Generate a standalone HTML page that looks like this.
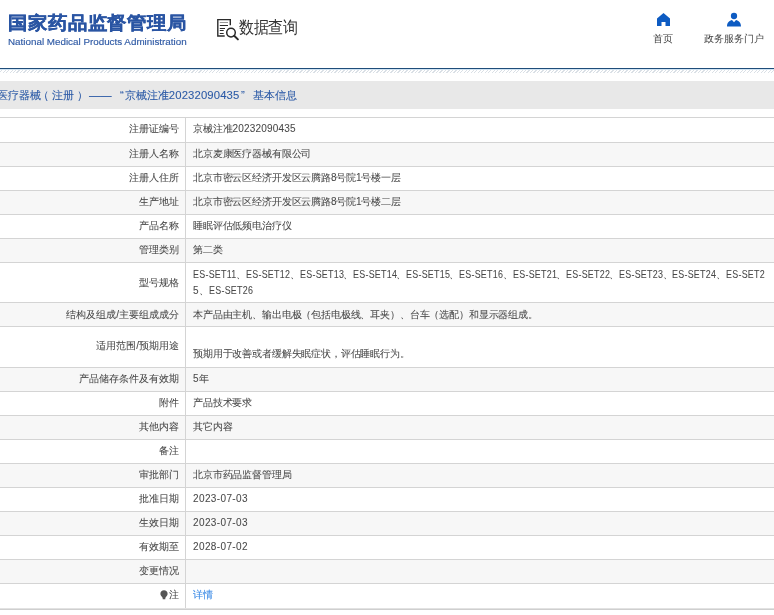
<!DOCTYPE html>
<html><head><meta charset="utf-8">
<style>
html,body{margin:0;padding:0;background:#fff;}
body{will-change:transform;width:774px;height:615px;overflow:hidden;position:relative;font-family:"Liberation Sans",sans-serif;}
.abs{position:absolute;white-space:nowrap;}
#logo-cn{left:8px;top:10.5px;transform:scaleY(0.93);transform-origin:0 0;font-size:19.8px;font-weight:bold;color:#2a55a3;-webkit-text-stroke:0.35px #2a55a3;letter-spacing:-0.12px;line-height:24px;}
#logo-en{left:8px;top:35.5px;font-size:9.83px;color:#2f5aa5;-webkit-text-stroke:0.15px #2f5aa5;line-height:12px;}
#dq{left:238.5px;top:17.5px;font-size:15px;color:#333;line-height:20px;transform:scale(0.975,1.1);transform-origin:0 17px;}
#dqicon{left:216px;top:18px;}
.nav{font-size:9.6px;color:#444;line-height:12px;}
#hline{left:0;top:68px;width:774px;height:1px;background:#1f4d7a;}
#hline2{left:0;top:69px;width:774px;height:1px;background:#cfe3f3;}
#hatch{left:0;top:70px;width:774px;height:3px;background:repeating-linear-gradient(-45deg,#fff 0,#fff 1.5px,#dae0e6 1.5px,#dae0e6 2.47px);}
#band{left:0;top:81px;width:774px;height:28px;background:#e8e8e8;}
.tt{position:absolute;top:88px;font-size:11.3px;color:#2a59a6;-webkit-text-stroke:0.08px #2a59a6;line-height:14px;white-space:nowrap;}
.row{position:absolute;left:0;width:774px;border-top:1px solid #d4d4d4;box-sizing:border-box;}
.row.g{background:#f7f7f7;}
.lb,.vl{position:absolute;top:0;bottom:0;display:flex;align-items:center;font-size:10px;color:#484848;-webkit-text-stroke-width:0.06px;line-height:16px;white-space:nowrap;padding-bottom:1.5px;box-sizing:border-box;}
.lb{left:0;width:179px;justify-content:flex-end;text-align:right;}
.vl{left:193px;letter-spacing:-0.15px;}
.vl>*{}
.tk{display:inline-block;width:43.42px;letter-spacing:0.3px;transform:scaleX(0.89);transform-origin:0 0;}
.lnk{color:#3a8ae6;-webkit-text-stroke-width:0.1px;}
.pin{display:inline-block;vertical-align:top;margin-top:3px;margin-right:1.5px;}
.dg{letter-spacing:0.2px;}
.dt{letter-spacing:0.38px;}
#vline{left:185px;top:117px;width:1px;height:491px;background:#d4d4d4;}
#bline{left:0;top:608px;width:774px;height:2px;background:linear-gradient(#e2e2e2 50%,#cfcfcf 50%);}
</style></head><body>
<div class="abs" id="logo-cn">国家药品监督管理局</div>
<div class="abs" id="logo-en">National Medical Products Administration</div>
<svg class="abs" id="dqicon" width="24" height="24" viewBox="0 0 24 24">
<path d="M8.7 18H1.8V1.6h12.5v5.6" fill="none" stroke="#2b2b2b" stroke-width="1.4"/>
<path d="M3.8 4.5h8.2" stroke="#999" stroke-width="1"/>
<path d="M3.8 7.5h8.2M3.8 10.5h5.2M3.8 12.5h3.9M3.8 15.5h3.9" stroke="#2b2b2b" stroke-width="1"/>
<circle cx="15" cy="14.6" r="4.3" fill="none" stroke="#2b2b2b" stroke-width="1.5"/>
<path d="M18.2 17.8l3.7 3.6" stroke="#2b2b2b" stroke-width="2" stroke-linecap="round"/>
</svg>
<div class="abs" id="dq">数据查询</div>
<svg class="abs" style="left:656px;top:12px" width="15" height="15" viewBox="0 0 15 15">
<path d="M7.5 1L1 6.5v7.5h4.5v-4h4v4H14V6.5z" fill="#0d5bc2"/>
</svg>
<div class="abs nav" style="left:653px;top:33px">首页</div>
<svg class="abs" style="left:726px;top:12px" width="16" height="15" viewBox="0 0 16 15">
<circle cx="8" cy="4" r="3.15" fill="#0d5bc2"/>
<path d="M1 14.5c0-4 2.5-6 5-6.5l2 2.2 2-2.2c2.5.5 5 2.5 5 6.5z" fill="#0d5bc2"/>
</svg>
<div class="abs nav" style="left:704px;top:33px">政务服务门户</div>
<div class="abs" id="hline"></div>
<div class="abs" id="hline2"></div>
<div class="abs" id="hatch"></div>
<div class="abs" id="band"></div>
<div class="tt" style="left:-3.3px">医疗器械</div>
<div class="tt" style="left:38.4px">（</div>
<div class="tt" style="left:52.2px">注册</div>
<div class="tt" style="left:76.9px">）</div>
<div class="tt" style="left:89px">——</div>
<div class="tt" style="left:120px">“</div>
<div class="tt" style="left:124.8px">京械注准<span style="letter-spacing:0.14px">20232090435</span></div>
<div class="tt" style="left:241px">”</div>
<div class="tt" style="left:252.6px">基本信息</div>

<div class="row" style="top:117px;height:25px"><div class="lb"><div>注册证编号</div></div><div class="vl"><div>京械注准<span class="dg">20232090435</span></div></div></div>
<div class="row g" style="top:142px;height:24px"><div class="lb"><div>注册人名称</div></div><div class="vl"><div>北京麦康医疗器械有限公司</div></div></div>
<div class="row" style="top:166px;height:24px"><div class="lb"><div>注册人住所</div></div><div class="vl"><div>北京市密云区经济开发区云腾路8号院1号楼一层</div></div></div>
<div class="row g" style="top:190px;height:24px"><div class="lb"><div>生产地址</div></div><div class="vl"><div>北京市密云区经济开发区云腾路8号院1号楼二层</div></div></div>
<div class="row" style="top:214px;height:24px"><div class="lb"><div>产品名称</div></div><div class="vl"><div>睡眠评估低频电治疗仪</div></div></div>
<div class="row g" style="top:238px;height:24px"><div class="lb"><div>管理类别</div></div><div class="vl"><div>第二类</div></div></div>
<div class="row" style="top:262px;height:40px"><div class="lb" style="top:1.2px;bottom:-1.2px"><div>型号规格</div></div><div class="vl" style="top:1.0px;bottom:-1.0px"><div><span class="tk">ES-SET11</span>、<span class="tk">ES-SET12</span>、<span class="tk">ES-SET13</span>、<span class="tk">ES-SET14</span>、<span class="tk">ES-SET15</span>、<span class="tk">ES-SET16</span>、<span class="tk">ES-SET21</span>、<span class="tk">ES-SET22</span>、<span class="tk">ES-SET23</span>、<span class="tk">ES-SET24</span>、<span class="tk">ES-SET2</span><br><span class="dt">5</span>、<span class="tk">ES-SET26</span></div></div></div>
<div class="row g" style="top:302px;height:24px"><div class="lb" style="top:1.2px;bottom:-1.2px"><div>结构及组成/主要组成成分</div></div><div class="vl" style="top:1.2px;bottom:-1.2px"><div>本产品由主机、输出电极（包括电极线、耳夹）、台车（选配）和显示器组成。</div></div></div>
<div class="row" style="top:326px;height:41px"><div class="lb"><div>适用范围/预期用途</div></div><div class="vl"><div><br>预期用于改善或者缓解失眠症状，评估睡眠行为。</div></div></div>
<div class="row g" style="top:367px;height:24px"><div class="lb"><div>产品储存条件及有效期</div></div><div class="vl"><div><span class="dt">5</span>年</div></div></div>
<div class="row" style="top:391px;height:24px"><div class="lb"><div>附件</div></div><div class="vl"><div>产品技术要求</div></div></div>
<div class="row g" style="top:415px;height:24px"><div class="lb"><div>其他内容</div></div><div class="vl"><div>其它内容</div></div></div>
<div class="row" style="top:439px;height:24px"><div class="lb"><div>备注</div></div><div class="vl"><div></div></div></div>
<div class="row g" style="top:463px;height:24px"><div class="lb"><div>审批部门</div></div><div class="vl"><div>北京市药品监督管理局</div></div></div>
<div class="row" style="top:487px;height:24px"><div class="lb"><div>批准日期</div></div><div class="vl"><div><span class="dt">2023-07-03</span></div></div></div>
<div class="row g" style="top:511px;height:24px"><div class="lb"><div>生效日期</div></div><div class="vl"><div><span class="dt">2023-07-03</span></div></div></div>
<div class="row" style="top:535px;height:24px"><div class="lb"><div>有效期至</div></div><div class="vl"><div><span class="dt">2028-07-02</span></div></div></div>
<div class="row g" style="top:559px;height:24px"><div class="lb"><div>变更情况</div></div><div class="vl"><div></div></div></div>
<div class="row" style="top:583px;height:25px"><div class="lb"><div><svg class="pin" width="8" height="10" viewBox="0 0 8 10"><path d="M4 0.3C1.9 0.3 0.4 1.8 0.4 3.8c0 1.4.8 2.4 1.7 3.2.4.4.6.9.6 1.4v.8h2.6v-.8c0-.5.2-1 .6-1.4.9-.8 1.7-1.8 1.7-3.2C7.6 1.8 6.1.3 4 .3z" fill="#555"/></svg>注</div></div><div class="vl"><div><span class="lnk">详情</span></div></div></div>
<div class="abs" id="vline"></div><div class="abs" id="bline"></div>
</body></html>
